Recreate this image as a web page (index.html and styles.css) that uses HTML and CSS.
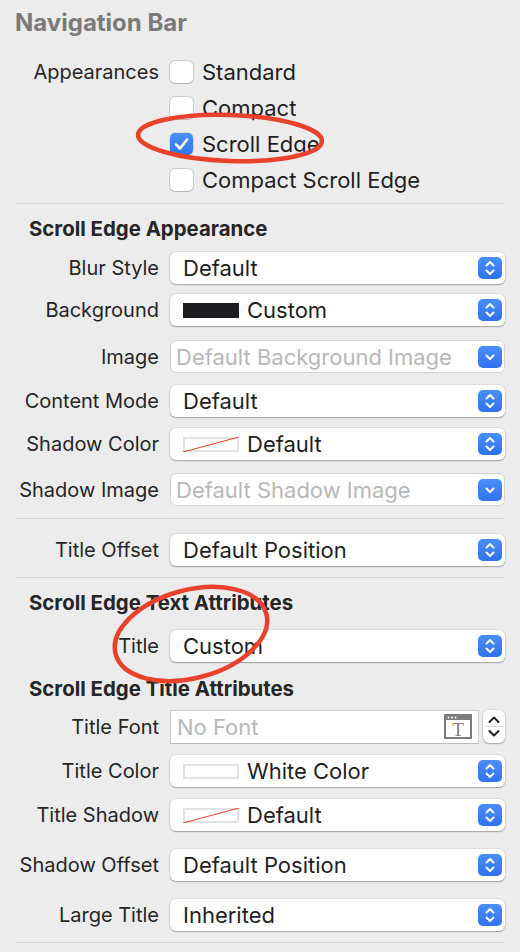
FILE: index.html
```html
<!DOCTYPE html>
<html>
<head>
<meta charset="utf-8">
<link rel="stylesheet" href="styles.css">
</head>
<body>
<div class="panel">
  <div class="title">Navigation Bar</div>

  <div class="checks">
    <div class="check-row">
      <div class="label">Appearances</div>
      <div class="check-item"><span class="box"></span><span class="ctext">Standard</span></div>
    </div>
    <div class="check-row">
      <div class="label"></div>
      <div class="check-item"><span class="box"></span><span class="ctext">Compact</span></div>
    </div>
    <div class="check-row">
      <div class="label"></div>
      <div class="check-item"><span class="box checked"><svg viewBox="0 0 23 22" width="23" height="22"><path d="M6 11.5 L10 15.5 L17 6.5" stroke="#fff" stroke-width="2.6" fill="none" stroke-linecap="round" stroke-linejoin="round"/></svg></span><span class="ctext">Scroll Edge</span></div>
    </div>
    <div class="check-row">
      <div class="label"></div>
      <div class="check-item"><span class="box"></span><span class="ctext">Compact Scroll Edge</span></div>
    </div>
  </div>

  <div class="sep s1"></div>
  <div class="header h1">Scroll Edge Appearance</div>

  <div class="row m11">
    <div class="label">Blur Style</div>
    <div class="popup"><span class="val">Default</span><span class="btn"><svg viewBox="0 0 24 22" width="24" height="22"><path d="M8.5 8.5 L12 5 L15.5 8.5 M8.5 13.5 L12 17 L15.5 13.5" stroke="#fff" stroke-width="2" fill="none" stroke-linecap="round" stroke-linejoin="round"/></svg></span></div>
  </div>
  <div class="row m10">
    <div class="label">Background</div>
    <div class="popup"><span class="swatch dark"></span><span class="val">Custom</span><span class="btn"><svg viewBox="0 0 24 22" width="24" height="22"><path d="M8.5 8.5 L12 5 L15.5 8.5 M8.5 13.5 L12 17 L15.5 13.5" stroke="#fff" stroke-width="2" fill="none" stroke-linecap="round" stroke-linejoin="round"/></svg></span></div>
  </div>
  <div class="row tall m14">
    <div class="label">Image</div>
    <div class="popup disabled"><span class="val ph">Default Background Image</span><span class="btn"><svg viewBox="0 0 24 22" width="24" height="22"><path d="M8.5 9.5 L12 13 L15.5 9.5" stroke="#fff" stroke-width="2" fill="none" stroke-linecap="round" stroke-linejoin="round"/></svg></span></div>
  </div>
  <div class="row m12">
    <div class="label">Content Mode</div>
    <div class="popup"><span class="val">Default</span><span class="btn"><svg viewBox="0 0 24 22" width="24" height="22"><path d="M8.5 8.5 L12 5 L15.5 8.5 M8.5 13.5 L12 17 L15.5 13.5" stroke="#fff" stroke-width="2" fill="none" stroke-linecap="round" stroke-linejoin="round"/></svg></span></div>
  </div>
  <div class="row m11">
    <div class="label">Shadow Color</div>
    <div class="popup"><span class="swatch none"><svg viewBox="0 0 56 15" width="56" height="15" preserveAspectRatio="none"><line x1="0" y1="15" x2="56" y2="0" stroke="#e8412c" stroke-width="1"/></svg></span><span class="val">Default</span><span class="btn"><svg viewBox="0 0 24 22" width="24" height="22"><path d="M8.5 8.5 L12 5 L15.5 8.5 M8.5 13.5 L12 17 L15.5 13.5" stroke="#fff" stroke-width="2" fill="none" stroke-linecap="round" stroke-linejoin="round"/></svg></span></div>
  </div>
  <div class="row tall m13">
    <div class="label">Shadow Image</div>
    <div class="popup disabled"><span class="val ph">Default Shadow Image</span><span class="btn"><svg viewBox="0 0 24 22" width="24" height="22"><path d="M8.5 9.5 L12 13 L15.5 9.5" stroke="#fff" stroke-width="2" fill="none" stroke-linecap="round" stroke-linejoin="round"/></svg></span></div>
  </div>

  <div class="sep m12"></div>

  <div class="row m15">
    <div class="label">Title Offset</div>
    <div class="popup"><span class="val">Default Position</span><span class="btn"><svg viewBox="0 0 24 22" width="24" height="22"><path d="M8.5 8.5 L12 5 L15.5 8.5 M8.5 13.5 L12 17 L15.5 13.5" stroke="#fff" stroke-width="2" fill="none" stroke-linecap="round" stroke-linejoin="round"/></svg></span></div>
  </div>

  <div class="sep m11"></div>
  <div class="header m13">Scroll Edge Text Attributes</div>

  <div class="row m15">
    <div class="label">Title</div>
    <div class="popup"><span class="val">Custom</span><span class="btn"><svg viewBox="0 0 24 22" width="24" height="22"><path d="M8.5 8.5 L12 5 L15.5 8.5 M8.5 13.5 L12 17 L15.5 13.5" stroke="#fff" stroke-width="2" fill="none" stroke-linecap="round" stroke-linejoin="round"/></svg></span></div>
  </div>

  <div class="header m15">Scroll Edge Title Attributes</div>

  <div class="row font-row m8">
    <div class="label">Title Font</div>
    <div class="font-ctrl">
      <div class="field"><span class="val ph">No Font</span>
        <span class="ticon"><svg viewBox="0 0 28 25" width="28" height="25"><rect x="1" y="1" width="26" height="23" fill="#fff" stroke="#7b7b7b" stroke-width="2"/><rect x="1" y="1" width="26" height="5" fill="#7b7b7b"/><circle cx="4.5" cy="3.5" r="1" fill="#fff"/><circle cx="8" cy="3.5" r="1" fill="#fff"/><circle cx="11.5" cy="3.5" r="1" fill="#fff"/><text x="14" y="21.5" text-anchor="middle" font-family="Liberation Serif, serif" font-size="19" fill="#7b7b7b">T</text></svg></span>
      </div>
      <div class="stepper"><svg viewBox="0 0 22 33" width="22" height="33"><path d="M6.5 12 L11 7.5 L15.5 12" stroke="#222" stroke-width="2" fill="none" stroke-linecap="round" stroke-linejoin="round"/><line x1="0" y1="16.5" x2="22" y2="16.5" stroke="#e2e2e2" stroke-width="1"/><path d="M6.5 21 L11 25.5 L15.5 21" stroke="#222" stroke-width="2" fill="none" stroke-linecap="round" stroke-linejoin="round"/></svg></div>
    </div>
  </div>

  <div class="row m11">
    <div class="label">Title Color</div>
    <div class="popup"><span class="swatch white"></span><span class="val">White Color</span><span class="btn"><svg viewBox="0 0 24 22" width="24" height="22"><path d="M8.5 8.5 L12 5 L15.5 8.5 M8.5 13.5 L12 17 L15.5 13.5" stroke="#fff" stroke-width="2" fill="none" stroke-linecap="round" stroke-linejoin="round"/></svg></span></div>
  </div>
  <div class="row m12">
    <div class="label">Title Shadow</div>
    <div class="popup"><span class="swatch none"><svg viewBox="0 0 56 15" width="56" height="15" preserveAspectRatio="none"><line x1="0" y1="15" x2="56" y2="0" stroke="#e8412c" stroke-width="1"/></svg></span><span class="val">Default</span><span class="btn"><svg viewBox="0 0 24 22" width="24" height="22"><path d="M8.5 8.5 L12 5 L15.5 8.5 M8.5 13.5 L12 17 L15.5 13.5" stroke="#fff" stroke-width="2" fill="none" stroke-linecap="round" stroke-linejoin="round"/></svg></span></div>
  </div>
  <div class="row m18">
    <div class="label">Shadow Offset</div>
    <div class="popup"><span class="val">Default Position</span><span class="btn"><svg viewBox="0 0 24 22" width="24" height="22"><path d="M8.5 8.5 L12 5 L15.5 8.5 M8.5 13.5 L12 17 L15.5 13.5" stroke="#fff" stroke-width="2" fill="none" stroke-linecap="round" stroke-linejoin="round"/></svg></span></div>
  </div>
  <div class="row m18">
    <div class="label">Large Title</div>
    <div class="popup"><span class="val">Inherited</span><span class="btn"><svg viewBox="0 0 24 22" width="24" height="22"><path d="M8.5 8.5 L12 5 L15.5 8.5 M8.5 13.5 L12 17 L15.5 13.5" stroke="#fff" stroke-width="2" fill="none" stroke-linecap="round" stroke-linejoin="round"/></svg></span></div>
  </div>

  <div class="sep m11"></div>
</div>

<svg class="annot" viewBox="0 0 520 952" width="520" height="952">
  <ellipse cx="230" cy="138" rx="92" ry="23" transform="rotate(2 230 138)" fill="none" stroke="#e8412c" stroke-width="4.5"/>
  <ellipse cx="191" cy="634" rx="78" ry="44" transform="rotate(-15 191 634)" fill="none" stroke="#e8412c" stroke-width="4.5"/>
</svg>
</body>
</html>
```

FILE: styles.css
```css
* { box-sizing: border-box; }
html, body {
  margin: 0;
  padding: 0;
}
body {
  width: 520px;
  height: 952px;
  overflow: hidden;
  background: #ececec;
  position: relative;
  font-family: Inter, "Liberation Sans", sans-serif;
  color: #262626;
}
.panel {
  display: flex;
  flex-direction: column;
  padding: 0 15px 0 0;
}
.title {
  height: 46px;
  line-height: 46px;
  padding-left: 15px;
  font-size: 24px;
  font-weight: 700;
  color: #7a7a7a;
}
.checks {
  margin-top: 8px;
  display: flex;
  flex-direction: column;
}
.check-row {
  height: 36px;
  display: grid;
  grid-template-columns: 159px 335px;
  column-gap: 11px;
  align-items: center;
}
.label {
  text-align: right;
  font-size: 20px;
  line-height: 24px;
  color: #262626;
  white-space: nowrap;
}
.check-item {
  display: flex;
  align-items: center;
  gap: 9px;
}
.box {
  width: 23px;
  height: 22px;
  border-radius: 5px;
  background: #fff;
  box-shadow: 0 0 0 1px rgba(0,0,0,0.13), 0 1px 1px rgba(0,0,0,0.12);
  display: block;
}
.box.checked {
  background: linear-gradient(#4b8ff8, #2f74ee);
  box-shadow: 0 0 0 0.5px rgba(0,0,0,0.15);
}
.box svg { display: block; }
.ctext {
  font-size: 22px;
  line-height: 26px;
  color: #1f1f1f;
}
.sep {
  height: 1px;
  background: #d6d6d6;
  margin-left: 16px;
  margin-right: 1px;
}
.s1 { margin-top: 5px; }
.header {
  height: 24px;
  line-height: 24px;
  padding-left: 29px;
  font-size: 20.4px;
  font-weight: 700;
  color: #262626;
}
.h1 { margin-top: 13px; }
.row {
  display: grid;
  grid-template-columns: 159px 335px;
  column-gap: 11px;
  align-items: center;
  height: 32px;
}
.row.tall { height: 33px; }
.row.font-row { height: 35px; }
.m8 { margin-top: 8px; }
.m10 { margin-top: 10px; }
.m11 { margin-top: 11px; }
.m12 { margin-top: 12px; }
.m13 { margin-top: 13px; }
.m14 { margin-top: 14px; }
.m15 { margin-top: 15px; }
.m18 { margin-top: 18px; }
.popup {
  height: 100%;
  background: #fff;
  border-radius: 6px;
  box-shadow: 0 0 0 0.5px rgba(0,0,0,0.12), 0 1px 1.5px rgba(0,0,0,0.28);
  display: flex;
  align-items: center;
  padding: 0 3px 0 13px;
}
.popup.disabled {
  box-shadow: none;
  border: 1px solid #d3d3d3;
  padding-left: 5px;
  padding-right: 2px;
}
.val {
  font-size: 22px;
  line-height: 26px;
  color: #1f1f1f;
  white-space: nowrap;
}
.val.ph { color: #b8b8b8; }
.btn {
  margin-left: auto;
  width: 24px;
  height: 22px;
  border-radius: 5px;
  background: linear-gradient(#4a8ef8, #2f73ee);
  display: block;
}
.btn svg { display: block; }
.swatch {
  width: 56px;
  height: 15px;
  margin-right: 8px;
  display: block;
  flex: none;
}
.swatch.dark { background: #1d1c21; }
.swatch.white, .swatch.none {
  background: #fff;
  box-shadow: inset 0 0 0 2px #e2e2e2;
}
.swatch svg { display: block; }
.font-ctrl {
  display: flex;
  align-items: center;
  gap: 4px;
  height: 100%;
}
.field {
  width: 310px;
  height: 34px;
  background: #fff;
  border: 1px solid #cfcfcf;
  border-bottom-color: #b9b9b9;
  display: flex;
  align-items: center;
  padding: 0 6px 0 6px;
}
.ticon {
  margin-left: auto;
  display: block;
}
.ticon svg { display: block; }
.stepper {
  width: 22px;
  height: 33px;
  background: #fff;
  border-radius: 6px;
  box-shadow: 0 0 0 0.5px rgba(0,0,0,0.12), 0 1px 1.5px rgba(0,0,0,0.28);
}
.stepper svg { display: block; }
.annot {
  position: absolute;
  top: 0;
  left: 0;
  pointer-events: none;
}
```
